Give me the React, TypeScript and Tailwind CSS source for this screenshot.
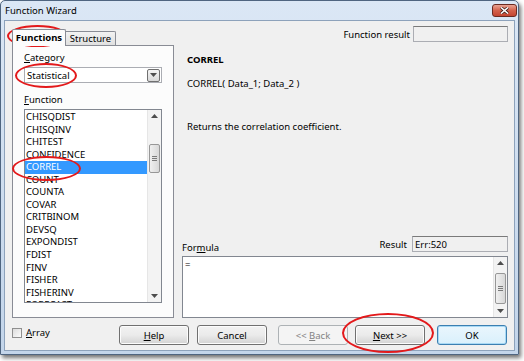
import React from "react"

const functions = [
  "CHISQDIST",
  "CHISQINV",
  "CHITEST",
  "CONFIDENCE",
  "CORREL",
  "COUNT",
  "COUNTA",
  "COVAR",
  "CRITBINOM",
  "DEVSQ",
  "EXPONDIST",
  "FDIST",
  "FINV",
  "FISHER",
  "FISHERINV",
  "FORECAST",
]

const Arrow = ({ down }: { down?: boolean }) => (
  <svg width="7" height="4" viewBox="0 0 7 4" className="block">
    {down ? (
      <path d="M0 0H7L3.5 4Z" fill="#4d4d4d" />
    ) : (
      <path d="M0 4H7L3.5 0Z" fill="#4d4d4d" />
    )}
  </svg>
)

// vertical scrollbar with arrows and a thumb
const ScrollBar = ({ thumbTop, thumbHeight }: { thumbTop: number; thumbHeight: number }) => (
  <div className="w-[14px] h-full bg-[#f3f3f3] border-l border-[#e6e6e6] flex flex-col items-center">
    <div className="h-[12px] flex items-center justify-center">
      <Arrow />
    </div>
    <div className="flex-1 w-full relative">
      <div
        className="absolute left-[1px] right-[1px] rounded-[2px] border border-[#979797] bg-gradient-to-r from-[#f0f0f0] to-[#d8d8d8] flex flex-col items-center justify-center gap-[1px]"
        style={{ top: thumbTop, height: thumbHeight }}
      >
        <div className="w-[5px] h-px bg-[#7a7a7a]" />
        <div className="w-[5px] h-px bg-[#7a7a7a]" />
        <div className="w-[5px] h-px bg-[#7a7a7a]" />
      </div>
    </div>
    <div className="h-[12px] flex items-center justify-center">
      <Arrow down />
    </div>
  </div>
)

const Btn = ({
  children,
  disabled,
  primary,
  className = "",
}: {
  children: React.ReactNode
  disabled?: boolean
  primary?: boolean
  className?: string
}) => (
  <div
    className={
      "w-[70px] h-[20px] rounded-[3px] border flex items-center justify-center " +
      (disabled
        ? "border-[#adb2b5] bg-[#f4f4f4] text-[#838383] "
        : primary
          ? "border-[#3c7fb1] bg-gradient-to-b from-[#eaf6fd] to-[#d9f0fc] shadow-[inset_0_0_0_1px_#a7d9f5] text-black "
          : "border-[#707070] bg-gradient-to-b from-[#f2f2f2] via-[#ebebeb] to-[#d3d3d3] shadow-[inset_0_0_0_1px_#fcfcfc] text-black ") +
      className
    }
  >
    {children}
  </div>
)

const Ellipse = ({ x, y, w, h }: { x: number; y: number; w: number; h: number }) => (
  <div
    className="absolute rounded-[50%] border-2 border-[#e3191b] pointer-events-none"
    style={{ left: x, top: y, width: w, height: h }}
  />
)

export default function App() {
  return (
    <div className="relative w-[524px] h-[361px] bg-white font-['Noto_Sans',sans-serif] text-black text-[9.5px] leading-[13px] overflow-hidden">
      {/* WINDOW */}
      <div className="w-[519px] h-[355px] rounded-t-[5px] border border-[#4f6580] bg-gradient-to-b from-[#dbe7f5] to-[#c3d5ea] shadow-[2px_3px_4px_rgba(0,0,0,0.55)] px-[3px] pb-[3px] flex flex-col">
        {/* TITLE */}
        <div className="h-[19px] flex items-center justify-between pl-[1px]">
          <span className="text-[9.5px] text-black">Function Wizard</span>
          <div className="w-[25px] h-[13px] -mr-[2px] rounded-[3px] border border-[#6b2a20] bg-gradient-to-b from-[#e8a393] via-[#d4614b] to-[#c44430] flex items-center justify-center">
            <svg width="9" height="7" viewBox="0 0 9 7">
              <path d="M1 0.5L8 6.5M8 0.5L1 6.5" stroke="#3b1a16" strokeWidth="3" />
              <path d="M1 0.5L8 6.5M8 0.5L1 6.5" stroke="#ffffff" strokeWidth="1.6" />
            </svg>
          </div>
        </div>

        {/* BODY */}
        <div className="flex-1 bg-[#f0f0f0] border border-[#8da2bb] flex flex-col">
          <div className="h-[297px] flex">
            {/* LEFT COLUMN */}
            <div className="ml-[7px] w-[162px] pt-[7px] flex flex-col">
              <div className="h-[17px] flex items-end relative z-10">
                <div className="h-[17px] w-[54px] border border-b-0 border-[#898c95] rounded-t-[2px] bg-[#fcfcfc] flex items-center justify-center font-bold -mb-px pb-px">
                  Functions
                </div>
                <div className="h-[14px] w-[50px] border border-l-0 border-b-0 border-[#898c95] rounded-tr-[2px] bg-gradient-to-b from-[#f2f2f2] to-[#e0e0e0] flex items-center justify-center">
                  Structure
                </div>
              </div>
              <div className="h-[273px] border border-[#898c95] bg-[#fcfcfc] pl-[11px] pt-[5px]">
                <div>
                  <span className="underline">C</span>ategory
                </div>
                <div className="mt-[3px] w-[138px] h-[16px] border border-[#abadb3] bg-white flex items-center justify-between pl-[2px] pr-px">
                  <span>Statistical</span>
                  <div className="w-[13px] h-[13px] border border-[#707070] rounded-[2px] bg-gradient-to-b from-[#f4f4f4] to-[#d8d8d8] flex items-center justify-center">
                    <Arrow down />
                  </div>
                </div>
                <div className="mt-[10px]">
                  <span className="underline">F</span>unction
                </div>
                <div className="mt-[3px] w-[138px] h-[194px] border border-[#828790] bg-white flex overflow-hidden">
                  <div className="flex-1 pt-px overflow-hidden">
                    {functions.map((f) => (
                      <div
                        key={f}
                        className={
                          "h-[12.55px] leading-[12.55px] pl-px " +
                          (f === "CORREL" ? "bg-[#3399ff] text-white" : "")
                        }
                      >
                        {f}
                      </div>
                    ))}
                  </div>
                  <ScrollBar thumbTop={22} thumbHeight={29} />
                </div>
              </div>
            </div>

            {/* RIGHT COLUMN */}
            <div className="ml-[8px] w-[326px] flex flex-col">
              <div className="mt-[5px] h-[16px] flex items-center justify-end gap-[3px]">
                <span>Function result</span>
                <div className="w-[95px] h-[16px] border border-[#abadb3] border-t-[#7a7a7a] bg-[#f0f0f0]" />
              </div>
              <div className="pl-[5px] mt-[11px] font-bold">CORREL</div>
              <div className="pl-[5px] mt-[11px]">CORREL( Data_1; Data_2 )</div>
              <div className="pl-[5px] mt-[30px]">Returns the correlation coefficient.</div>
              <div className="flex-1" />
              <div className="h-[16px] flex items-end justify-between">
                <span className="-mb-[2px]">
                  For<span className="underline">m</span>ula
                </span>
                <div className="flex items-center gap-[5px] self-stretch">
                  <span>Result</span>
                  <div className="w-[96px] h-[16px] border border-[#abadb3] border-t-[#7a7a7a] bg-[#f0f0f0] pl-[2px] flex items-center">
                    Err:520
                  </div>
                </div>
              </div>
              <div className="mt-[4px] h-[62px] border border-[#828790] bg-white flex">
                <div className="flex-1 pl-[2px] pt-px">=</div>
                <ScrollBar thumbTop={4} thumbHeight={31} />
              </div>
            </div>
          </div>

          {/* BOTTOM ROW */}
          <div className="mt-[7px] h-[20px] flex items-center">
            <div className="ml-[7px] w-[107px] flex items-center gap-[4px] self-start mt-px">
              <div className="w-[10px] h-[10px] border border-[#8f8f8f] bg-gradient-to-br from-[#dcdcdc] to-[#fbfbfb]" />
              <span>
                <span className="underline">A</span>rray
              </span>
            </div>
            <Btn>
              <span className="underline">H</span>elp
            </Btn>
            <Btn className="ml-[8px]">Cancel</Btn>
            <Btn disabled className="ml-[11px]">
              &lt;&lt;&nbsp;<span className="underline">B</span>ack
            </Btn>
            <Btn className="ml-[7px]">
              <span className="underline">N</span>ext &gt;&gt;
            </Btn>
            <Btn primary className="ml-[12px]">
              OK
            </Btn>
          </div>
        </div>
      </div>

      {/* RED ANNOTATIONS */}
      <Ellipse x={7} y={25} w={61} h={22} />
      <Ellipse x={15} y={63} w={62} h={25} />
      <Ellipse x={12} y={156} w={69} h={25} />
      <Ellipse x={342} y={313} w={92} h={40} />
    </div>
  )
}
